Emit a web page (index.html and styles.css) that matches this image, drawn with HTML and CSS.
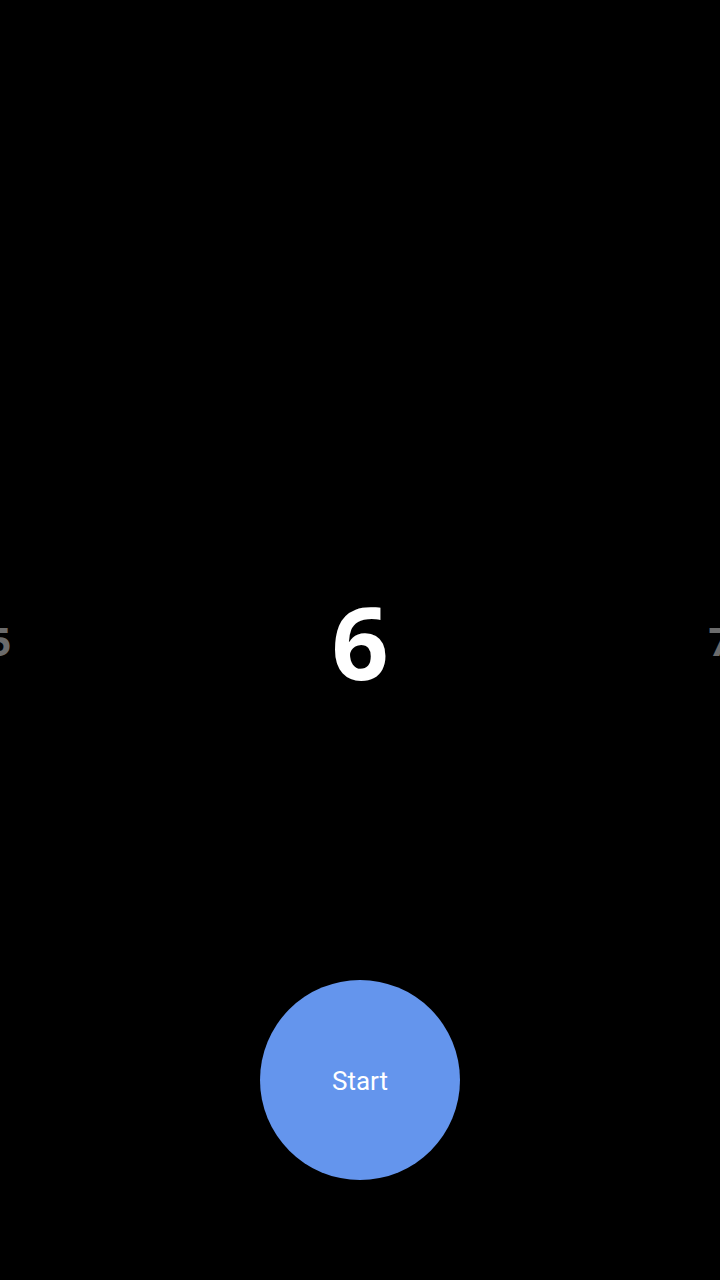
FILE: index.html
```html
<!DOCTYPE html>
<html>
<head>
<meta charset="utf-8">
<link rel="stylesheet" href="styles.css">
</head>
<body>
<div class="screen">
  <div class="picker">
    <div class="item side">5</div>
    <div class="item current">6</div>
    <div class="item side">7</div>
  </div>
  <div class="actions">
    <button class="start">Start</button>
  </div>
</div>
</body>
</html>
```

FILE: styles.css
```css
html, body {
  margin: 0;
  padding: 0;
  background: #000;
}
.screen {
  width: 720px;
  height: 1280px;
  overflow: hidden;
  display: flex;
  flex-direction: column;
  background: #000;
}
.picker {
  display: flex;
  align-items: center;
  width: 1080px;
  margin-left: -180px;
  margin-top: 591px;
  height: 100px;
}
.item {
  width: 360px;
  text-align: center;
  font-family: "Open Sans", sans-serif;
  font-weight: 700;
  line-height: 1;
}
.current {
  font-size: 100px;
  color: #fff;
}
.side {
  font-size: 40px;
  color: #6b6b6b;
}
.actions {
  display: flex;
  justify-content: center;
  margin-top: 289px;
}
.start {
  width: 200px;
  height: 200px;
  border-radius: 50%;
  border: none;
  padding: 2px 0 0;
  background: #6495ed;
  color: #fff;
  font-family: Roboto, sans-serif;
  font-size: 26px;
  font-weight: 400;
}
```
